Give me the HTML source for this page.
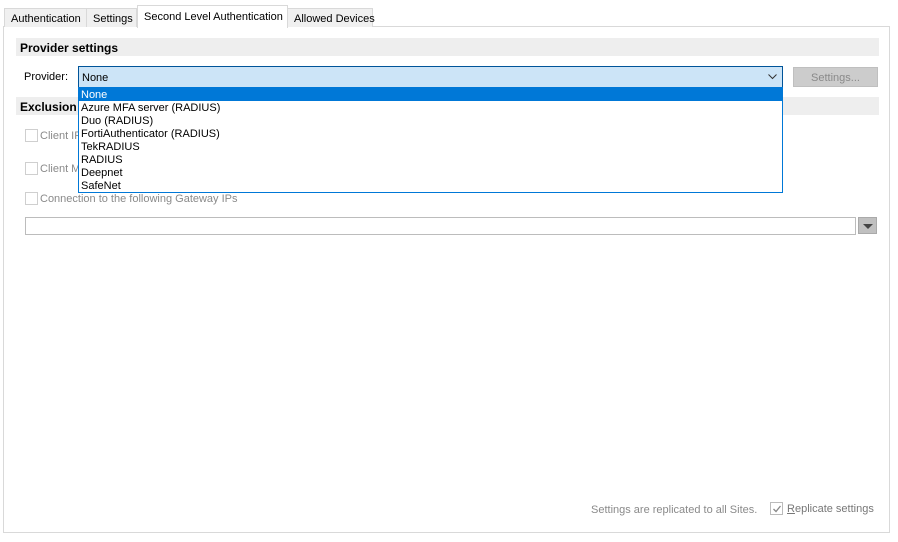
<!DOCTYPE html>
<html><head><style>
body{margin:0;width:898px;height:542px;background:#fff;font-family:"Liberation Sans",sans-serif;font-size:11px;color:#000;position:relative;overflow:hidden}
div,span{position:absolute;box-sizing:border-box}
.tab{top:8px;height:19px;border:1px solid #d9d9d9;border-bottom:none;background:#f0f0f0;padding:4px 0 0 6px;white-space:nowrap}
.hdr{left:16px;width:863px;height:18px;background:#eeeeee;font-weight:bold;padding:3px 0 0 4px;font-size:12px}
.cb{width:13px;height:13px;border:1px solid #cfcfcf;background:#fff}
.g{color:#8a8a8a;white-space:nowrap}
.it{left:2px;white-space:nowrap}
</style></head><body>
<div style="left:3px;top:26px;width:887px;height:507px;border:1px solid #d9d9d9"></div>
<div class="tab" style="left:4px;width:83px">Authentication</div>
<div class="tab" style="left:86px;width:51px">Settings</div>
<div class="tab" style="left:287px;width:86px">Allowed Devices</div>
<div class="tab" style="left:137px;top:5px;width:151px;height:23px;background:#fff;padding-top:5px">Second Level Authentication</div>
<div class="hdr" style="top:38px">Provider settings</div>
<div class="hdr" style="top:97px">Exclusion</div>
<div style="left:24px;top:71px">Provider:</div>
<div style="left:78px;top:66px;width:705px;height:22px;background:#cce4f7;border:1px solid #005499;padding:5px 0 0 3px">None
<svg style="position:absolute;right:5px;top:7px" width="9" height="6"><path d="M0.5 0.5L4.5 4.5L8.5 0.5" stroke="#333" fill="none"/></svg></div>
<div style="left:793px;top:67px;width:85px;height:20px;background:#cccccc;border:1px solid #bfbfbf;color:#8a8a8a;text-align:center;padding-top:4px">Settings...</div>
<div class="cb" style="left:25px;top:129px"></div><div class="g" style="left:40px;top:130px">Client IP</div>
<div class="cb" style="left:25px;top:162px"></div><div class="g" style="left:40px;top:163px">Client M</div>
<div class="cb" style="left:25px;top:192px"></div><div class="g" style="left:40px;top:193px">Connection to the following Gateway IPs</div>
<div style="left:78px;top:87px;width:705px;height:106px;background:#fff;border:1px solid #0078d7;border-top:none">
<div style="left:0;top:0;width:703px;height:14px;background:#0078d7"></div>
<div class="it" style="top:2px;color:#fff">None</div>
<div class="it" style="top:15px">Azure MFA server (RADIUS)</div>
<div class="it" style="top:28px">Duo (RADIUS)</div>
<div class="it" style="top:41px">FortiAuthenticator (RADIUS)</div>
<div class="it" style="top:54px">TekRADIUS</div>
<div class="it" style="top:67px">RADIUS</div>
<div class="it" style="top:80px">Deepnet</div>
<div class="it" style="top:93px">SafeNet</div>
</div>
<div style="left:25px;top:217px;width:831px;height:18px;border:1px solid #bcbcbc"></div>
<div style="left:858px;top:217px;width:19px;height:17px;background:#c0c0c0;border:1px solid #aaa">
<svg style="position:absolute;left:4px;top:6px" width="10" height="5"><path d="M0 0H10L5 5Z" fill="#444"/></svg></div>
<div class="g" style="left:591px;top:504px">Settings are replicated to all Sites.</div>
<div class="cb" style="left:770px;top:502px;border-color:#bbb">
<svg style="position:absolute;left:1px;top:1px" width="10" height="10"><path d="M1.5 5L4 7.5L8.5 2" stroke="#888" stroke-width="1.3" fill="none"/></svg></div>
<div class="g" style="left:787px;top:503px;color:#777"><u>R</u>eplicate settings</div>
</body></html>
